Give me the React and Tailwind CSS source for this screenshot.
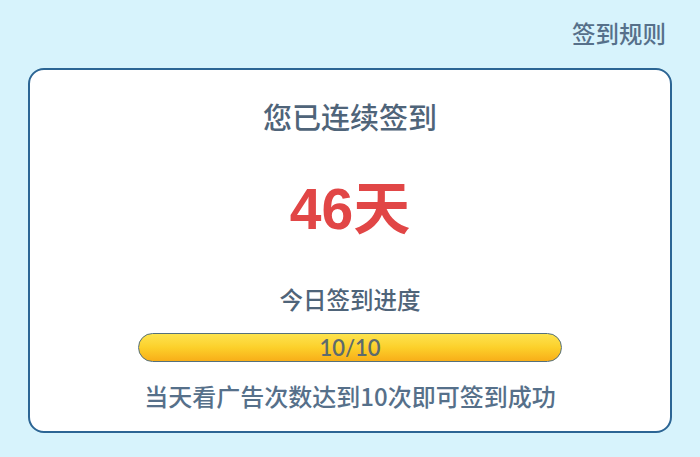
import React from 'react';

const font = { fontFamily: '"Noto Sans CJK SC", "Noto Sans", sans-serif' };

export default function App() {
  return (
    <div className="w-[700px] h-[457px] bg-[#d7f3fc] flex flex-col overflow-hidden" style={font}>
      <div className="h-[68px] flex items-start justify-end pr-[34px] pt-[16px]">
        <span className="text-[23.5px] leading-[34px] font-medium text-[#56708a]">签到规则</span>
      </div>
      <div className="mx-[28px] h-[365px] bg-white border-[2.5px] border-[#2c6594] rounded-[16px] flex flex-col items-center">
        <div className="mt-[28px] text-[29px] leading-[36px] font-medium text-[#4f6479]">您已连续签到</div>
        <div className="mt-[42px] text-[57px] leading-[66px] font-bold text-[#e14646]" style={{ fontFamily: '"Liberation Sans", "Noto Sans CJK SC", sans-serif' }}>46天</div>
        <div className="mt-[42px] text-[23.5px] leading-[30px] font-medium text-[#4f6479]">今日签到进度</div>
        <div className="mt-[19px] w-[424px] h-[29px] rounded-full border border-[#54707c] bg-gradient-to-b from-[#fde34c] via-[#fcd02a] to-[#f8ae18] flex items-center justify-center">
          <span className="text-[22px] leading-[26px] font-semibold text-[#5d6b6d]" style={{ fontFamily: 'Lato, "Open Sans", sans-serif' }}>10/10</span>
        </div>
        <div className="mt-[19px] text-[24px] leading-[30px] font-medium text-[#56708a]">当天看广告次数达到10次即可签到成功</div>
      </div>
    </div>
  );
}
